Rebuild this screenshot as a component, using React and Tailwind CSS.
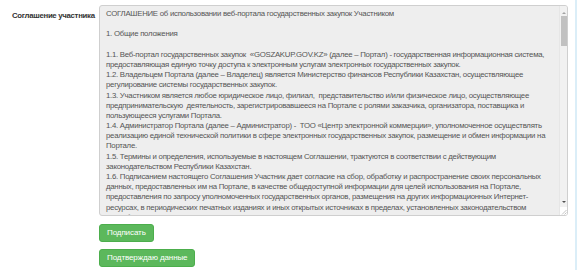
import React from "react";

const lines = [
  "СОГЛАШЕНИЕ об использовании веб-портала государственных закупок Участником",
  "",
  "1. Общие положения",
  "",
  "1.1. Веб-портал государственных закупок  «GOSZAKUP.GOV.KZ» (далее – Портал) - государственная информационная система,",
  "предоставляющая единую точку доступа к электронным услугам электронных государственных закупок.",
  "1.2. Владельцем Портала (далее – Владелец) является Министерство финансов Республики Казахстан, осуществляющее",
  "регулирование системы государственных закупок.",
  "1.3. Участником является любое юридическое лицо, филиал,  представительство и/или физическое лицо, осуществляющее",
  "предпринимательскую  деятельность, зарегистрировавшееся на Портале с ролями заказчика, организатора, поставщика и",
  "пользующееся услугами Портала.",
  "1.4. Администратор Портала (далее – Администратор) -  ТОО «Центр электронной коммерции», уполномоченное осуществлять",
  "реализацию единой технической политики в сфере электронных государственных закупок, размещение и обмен информации на",
  "Портале.",
  "1.5. Термины и определения, используемые в настоящем Соглашении, трактуются в соответствии с действующим",
  "законодательством Республики Казахстан.",
  "1.6. Подписанием настоящего Соглашения Участник дает согласие на сбор, обработку и распространение своих персональных",
  "данных, предоставленных им на Портале, в качестве общедоступной информации для целей использования на Портале,",
  "предоставления по запросу уполномоченных государственных органов, размещения на других информационных Интернет-",
  "ресурсах, в периодических печатных изданиях и иных открытых источниках в пределах, установленных законодательством",
  "Республики Казахстан.",
];

const Scrollbar = () => (
  <div className="w-[8px] flex flex-col items-center bg-[#f1f1f1] border-l border-[#e6e6e6]">
    <div className="h-[8px] flex items-end justify-center">
      <div className="w-0 h-0 border-l-[2px] border-r-[2px] border-b-[2px] border-l-transparent border-r-transparent border-b-[#a3a3a3]" />
    </div>
    <div className="mt-[2px] w-[6px] h-[30px] bg-[#c1c1c1]" />
    <div className="flex-1" />
    <div className="h-[6px] flex items-start justify-center">
      <div className="w-0 h-0 border-l-[2px] border-r-[2px] border-t-[2px] border-l-transparent border-r-transparent border-t-[#505050]" />
    </div>
    <div className="h-[8px] w-full bg-white flex items-end justify-end">
      <svg width="6" height="6" viewBox="0 0 6 6">
        <path d="M5.5 1 L1 5.5 M5.5 3.5 L3.5 5.5" stroke="#b5b5b5" strokeWidth="0.8" />
      </svg>
    </div>
  </div>
);

const GreenButton = ({ children }) => (
  <button className="h-[18px] px-[7px] rounded-[3px] bg-[#5cb85c] border border-[#4cae4c] text-white text-[8px] tracking-[-0.1px] leading-none">
    {children}
  </button>
);

export default function App() {
  return (
    <div
      className="w-[578px] h-[270px] bg-white flex overflow-hidden"
      style={{ fontFamily: '"Liberation Sans", Arial, sans-serif' }}
    >
      <div className="w-[99px] pl-[12px] pt-[10px] text-[7.8px] tracking-[-0.3px] font-bold text-[#333] whitespace-nowrap">
        Соглашение участника
      </div>
      <div className="flex flex-col items-start pt-[5px]">
        <div className="w-[469px] h-[211px] border border-[#cfcfcf] rounded-[3px] bg-[#eeeeee] flex overflow-hidden">
          <div className="flex-1 overflow-hidden pl-[6px] pt-[3px] text-[7.8px] tracking-[-0.26px] leading-[10.2px] text-[#555]">
            {lines.map((l, i) => (
              <div key={i} className="whitespace-pre h-[10.2px]">
                {l}
              </div>
            ))}
          </div>
          <Scrollbar />
        </div>
        <div className="mt-[8px] flex flex-col items-start gap-[7px]">
          <GreenButton>Подписать</GreenButton>
          <GreenButton>Подтверждаю данные</GreenButton>
        </div>
      </div>
      <div className="flex-1" />
      <div className="w-[2px] h-full bg-[#dbeef8] mr-[1px]" />
    </div>
  );
}
